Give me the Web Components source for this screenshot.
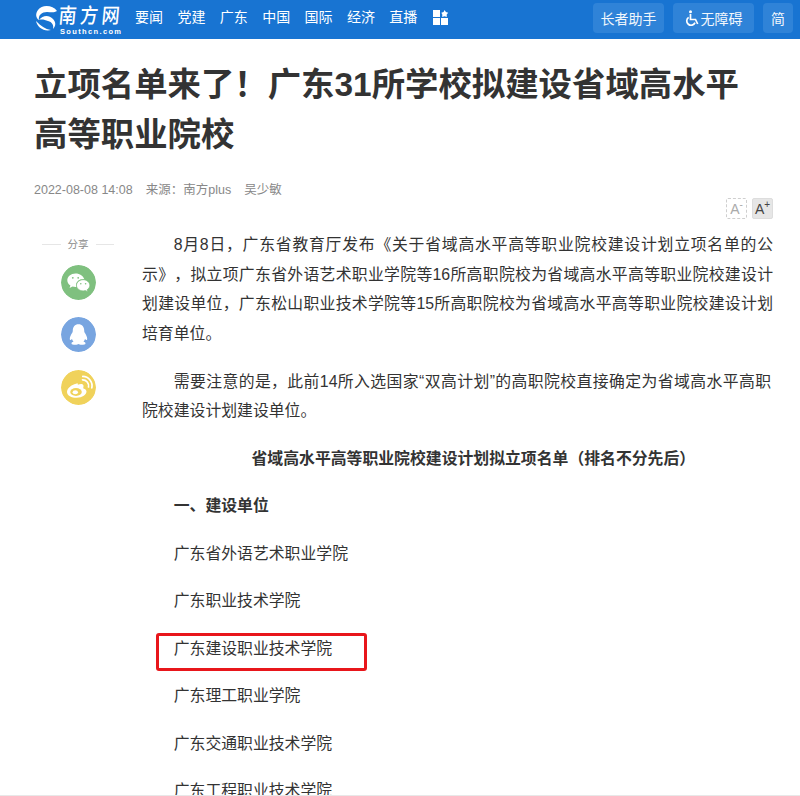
<!DOCTYPE html>
<html lang="zh"><head><meta charset="utf-8">
<style>
html,body{margin:0;padding:0;background:#fff;height:796px;overflow:hidden;position:relative;font-family:"Liberation Sans","Noto Sans CJK SC",sans-serif}
body::after{content:"";position:absolute;left:0;right:0;top:795px;height:1px;background:#e8e8e8}
</style></head><body>
<site-header></site-header>
<news-article></news-article>
<script>
const CJK='"Liberation Sans","Noto Sans CJK SC",sans-serif';
class SiteHeader extends HTMLElement{constructor(){super();this.attachShadow({mode:'open'}).innerHTML=`
<style>
:host{display:flex;align-items:center;height:39px;background:#1874d2;color:#fff;font-family:${CJK};padding-left:35px}
.logo{display:flex;width:86px;height:39px;flex:none}
.logo svg{flex:none;margin-top:4px}
.brand{display:flex;flex-direction:column;margin-left:2px}
.cn{font:500 18px/21px "Noto Sans CJK SC",serif;letter-spacing:3.400px;white-space:nowrap;margin-top:2px;height:24px;transform:scaleY(1.15) skewX(-6deg);transform-origin:left top}
.en{font:700 7.500px/8px "Liberation Sans",sans-serif;letter-spacing:1.350px;white-space:nowrap;margin-top:2px}
nav{display:flex;gap:14.400px;margin-left:14px;font-size:14px;line-height:20px;margin-top:-5px}
.grid{margin-left:16px;margin-top:-5px}
.tools{display:flex;gap:9px;margin-left:auto;margin-right:7px;margin-top:-3px}
.btn{height:30px;box-sizing:border-box;background:#2f83d8;border-radius:4px;display:flex;align-items:center;justify-content:center;font-size:14px;gap:1px;color:#f2f7fc}
</style>
<div class="logo">
<svg width="23" height="28" viewBox="0 0 23 28" fill="#fff"><path d="M22 7C18 1 7 0 3 6 0 10 1 14 4 16 3 11 7 8 12 8c4 0 7 1 10-1z"/><path d="M4 16c4-5 10-5 14-1 3 3 3 7 0 10 1-4-1-7-5-8-3-1-6-2-9-1z"/><path d="M1 17c1 6 8 11 15 9-6-1-10-4-15-9z"/></svg>
<div class="brand"><span class="cn">南方网</span><span class="en">Southcn.com</span></div>
</div>
<nav><span>要闻</span><span>党建</span><span>广东</span><span>中国</span><span>国际</span><span>经济</span><span>直播</span></nav>
<svg class="grid" width="16" height="15" viewBox="0 0 16 15" fill="#fff"><rect x="0" y="0" width="7" height="7"/><rect x="0" y="8" width="7" height="7"/><rect x="8" y="8" width="7" height="7"/><path d="M11.500 0l1.400 2 2.300.7-1.500 1.900.1 2.400-2.300-.8-2.300.8.1-2.400L8.300 2.700l2.300-.7z"/></svg>
<div class="tools">
<div class="btn" style="width:71px">长者助手</div>
<div class="btn" style="width:81px"><svg width="15" height="17" viewBox="0 0 15 17" fill="none" stroke="#fff" stroke-width="1.700"><circle cx="5.500" cy="1.700" r="1.500" fill="#fff" stroke="none"/><path d="M5.500 4v5.500h5l2.200 4.500"/><path d="M3.600 7.400a4.300 4.300 0 1 0 6.400 5.200"/></svg><span>无障碍</span></div>
<div class="btn" style="width:30px">简</div>
</div>`}}
customElements.define('site-header',SiteHeader);

class ShareRail extends HTMLElement{constructor(){super();this.attachShadow({mode:'open'}).innerHTML=`
<style>
:host{display:flex;flex-direction:column;align-items:center;width:72px;flex:none}
.t{display:flex;align-items:center;gap:7px;width:72px;font-size:10.500px;line-height:14px;color:#8a8a8a;white-space:nowrap;margin-bottom:13.500px}
.t i{flex:1;height:1px;background:#e6e6e6}
.c{width:35px;height:35px;border-radius:50%;margin-bottom:17.500px;display:block}
</style>
<div class="t"><i></i>分享<i></i></div>
<svg class="c" viewBox="0 0 35 35"><circle cx="17.500" cy="17.500" r="17.500" fill="#7fc07f"/>
<path d="M14.500 8.500c-4.600 0-8.200 3-8.200 6.800 0 2.200 1.200 4 3.100 5.300l-.8 2.500 2.900-1.500c1 .3 2 .5 3 .5h.8a6 6 0 0 1-.3-1.800c0-3.500 3.400-6.300 7.500-6.300h.7c-.8-3-4.200-5.500-8.700-5.500z" fill="#fff"/>
<path d="M28.800 20.300c0-3.100-3-5.600-6.600-5.600s-6.700 2.500-6.700 5.600 3 5.600 6.700 5.600c.8 0 1.500-.1 2.200-.3l2.300 1.200-.6-2c1.700-1.100 2.700-2.700 2.700-4.500z" fill="#fff" stroke="#7fc07f" stroke-width=".7"/>
<g fill="#7fc07f"><circle cx="11.800" cy="12.800" r=".9"/><circle cx="17.200" cy="12.800" r=".9"/><circle cx="19.800" cy="18.800" r=".8"/><circle cx="24.600" cy="18.800" r=".8"/></g></svg>
<svg class="c" viewBox="0 0 35 35"><circle cx="17.500" cy="17.500" r="17.500" fill="#78a5e0"/>
<path d="M17.500 7.300c-3.700 0-5.600 2.700-5.700 6-.1 1 0 1.400-.4 2.200-1.300 2-2.600 4.300-2.600 6.300 0 1.800.9 1.600 2.200.2.300 1 .8 1.900 1.500 2.600-1.200.5-2 1.100-2 1.800 0 1 1.800 1.400 4 1.400 1.300 0 2.400-.3 3-.8.6.5 1.700.8 3 .8 2.200 0 4-.4 4-1.400 0-.7-.8-1.300-2-1.800.7-.7 1.200-1.600 1.500-2.600 1.300 1.400 2.200 1.600 2.200-.2 0-2-1.300-4.300-2.600-6.300-.4-.8-.3-1.200-.4-2.200-.1-3.300-2-6-5.700-6z" fill="#fff"/></svg>
<svg class="c" viewBox="0 0 35 35"><circle cx="17.500" cy="17.500" r="17.500" fill="#f0d25b"/>
<path d="M15 13.800c-4.600 1-9 4.700-9 8.200 0 3.600 4.700 5.800 9.500 5.800 6 0 10-3.300 10-6.200 0-1.800-1.500-2.700-2.900-3.100-.7-.2-.4-.8-.2-1.300.3-1.200.2-2.500-1-3-1.300-.5-3.300.1-4.500.6-.3-.2 .5-2.700-1.900-1z" fill="#fff"/>
<ellipse cx="15" cy="22" rx="5.800" ry="3.900" fill="#f0d25b"/><ellipse cx="14.300" cy="22.200" rx="2.700" ry="2" fill="#fff"/>
<path d="M21.500 9.800a6 6 0 0 1 6 7.200M21.800 6.400a9.400 9.400 0 0 1 9 11.400" fill="none" stroke="#fff" stroke-width="1.700" stroke-linecap="round"/></svg>`}}
customElements.define('share-rail',ShareRail);

class FontTools extends HTMLElement{constructor(){super();this.attachShadow({mode:'open'}).innerHTML=`
<style>
:host{display:flex;justify-content:flex-end;gap:5px;height:22px}
.b{width:21px;height:21px;box-sizing:border-box;display:flex;align-items:center;justify-content:center;font:400 14px/1 "Liberation Sans",sans-serif;border-radius:2px}
.b sup{font-size:10px;line-height:1;margin-top:-7px}
.a{border:1px dashed #cfcfcf;color:#aaa}
.p{background:#e6e6e6;border:1px solid #ddd;color:#444}
</style><div class="b a">A<sup>-</sup></div><div class="b p">A<sup>+</sup></div>`}}
customElements.define('font-tools',FontTools);

class NewsArticle extends HTMLElement{constructor(){super();this.attachShadow({mode:'open'}).innerHTML=`
<style>
:host{display:block;padding:0 26px 0 34px;color:#333;font-family:${CJK};text-spacing-trim:space-all}
h1{margin:21px 0 0;max-width:720px;font-size:33.400px;line-height:50px;font-weight:700;color:#333}
.meta{margin-top:21px;font-size:12.500px;line-height:18px;color:#888;display:flex;gap:13px;white-space:nowrap}
.body{display:flex;margin-top:-1px}
share-rail{margin-top:39px;margin-left:8px;margin-right:-9px}
.main{margin-left:37px;flex:1;min-width:0;margin-right:1px}
font-tools{margin-bottom:10px}
p{margin:0 0 17.800px;font-size:15.850px;line-height:29.700px;text-indent:2em;color:#333;text-align:justify}
.n{padding-right:2px}
.c{text-align:center;font-weight:700}
.b{font-weight:700}
.hl{position:relative}
.box{position:absolute;left:14px;top:-1px;width:205px;height:32px;border:3px solid #e8161b;border-radius:3px}
</style>
<h1>立项名单来了！广东31所学校拟建设省域高水平高等职业院校</h1>
<div class="meta"><span>2022-08-08 14:08</span><span>来源：南方plus</span><span>吴少敏</span></div>
<div class="body"><share-rail></share-rail>
<div class="main"><font-tools></font-tools>
<p>8月8日，广东省教育厅发布《关于省域高水平高等职业院校建设计划立项名单的公示》，拟立项广东省外语艺术职业学院等16所高职院校为省域高水平高等职业院校建设计划建设单位，广东松山职业技术学院等15所高职院校为省域高水平高等职业院校建设计划培育单位。</p>
<p class="n">需要注意的是，此前14所入选国家“双高计划”的高职院校直接确定为省域高水平高职院校建设计划建设单位。</p>
<p class="c">省域高水平高等职业院校建设计划拟立项名单（排名不分先后）</p>
<p class="b">一、建设单位</p>
<p>广东省外语艺术职业学院</p>
<p>广东职业技术学院</p>
<p class="hl">广东建设职业技术学院<span class="box"></span></p>
<p>广东理工职业学院</p>
<p>广东交通职业技术学院</p>
<p>广东工程职业技术学院</p>
</div></div>`}}
customElements.define('news-article',NewsArticle);
</script>
</body></html>
